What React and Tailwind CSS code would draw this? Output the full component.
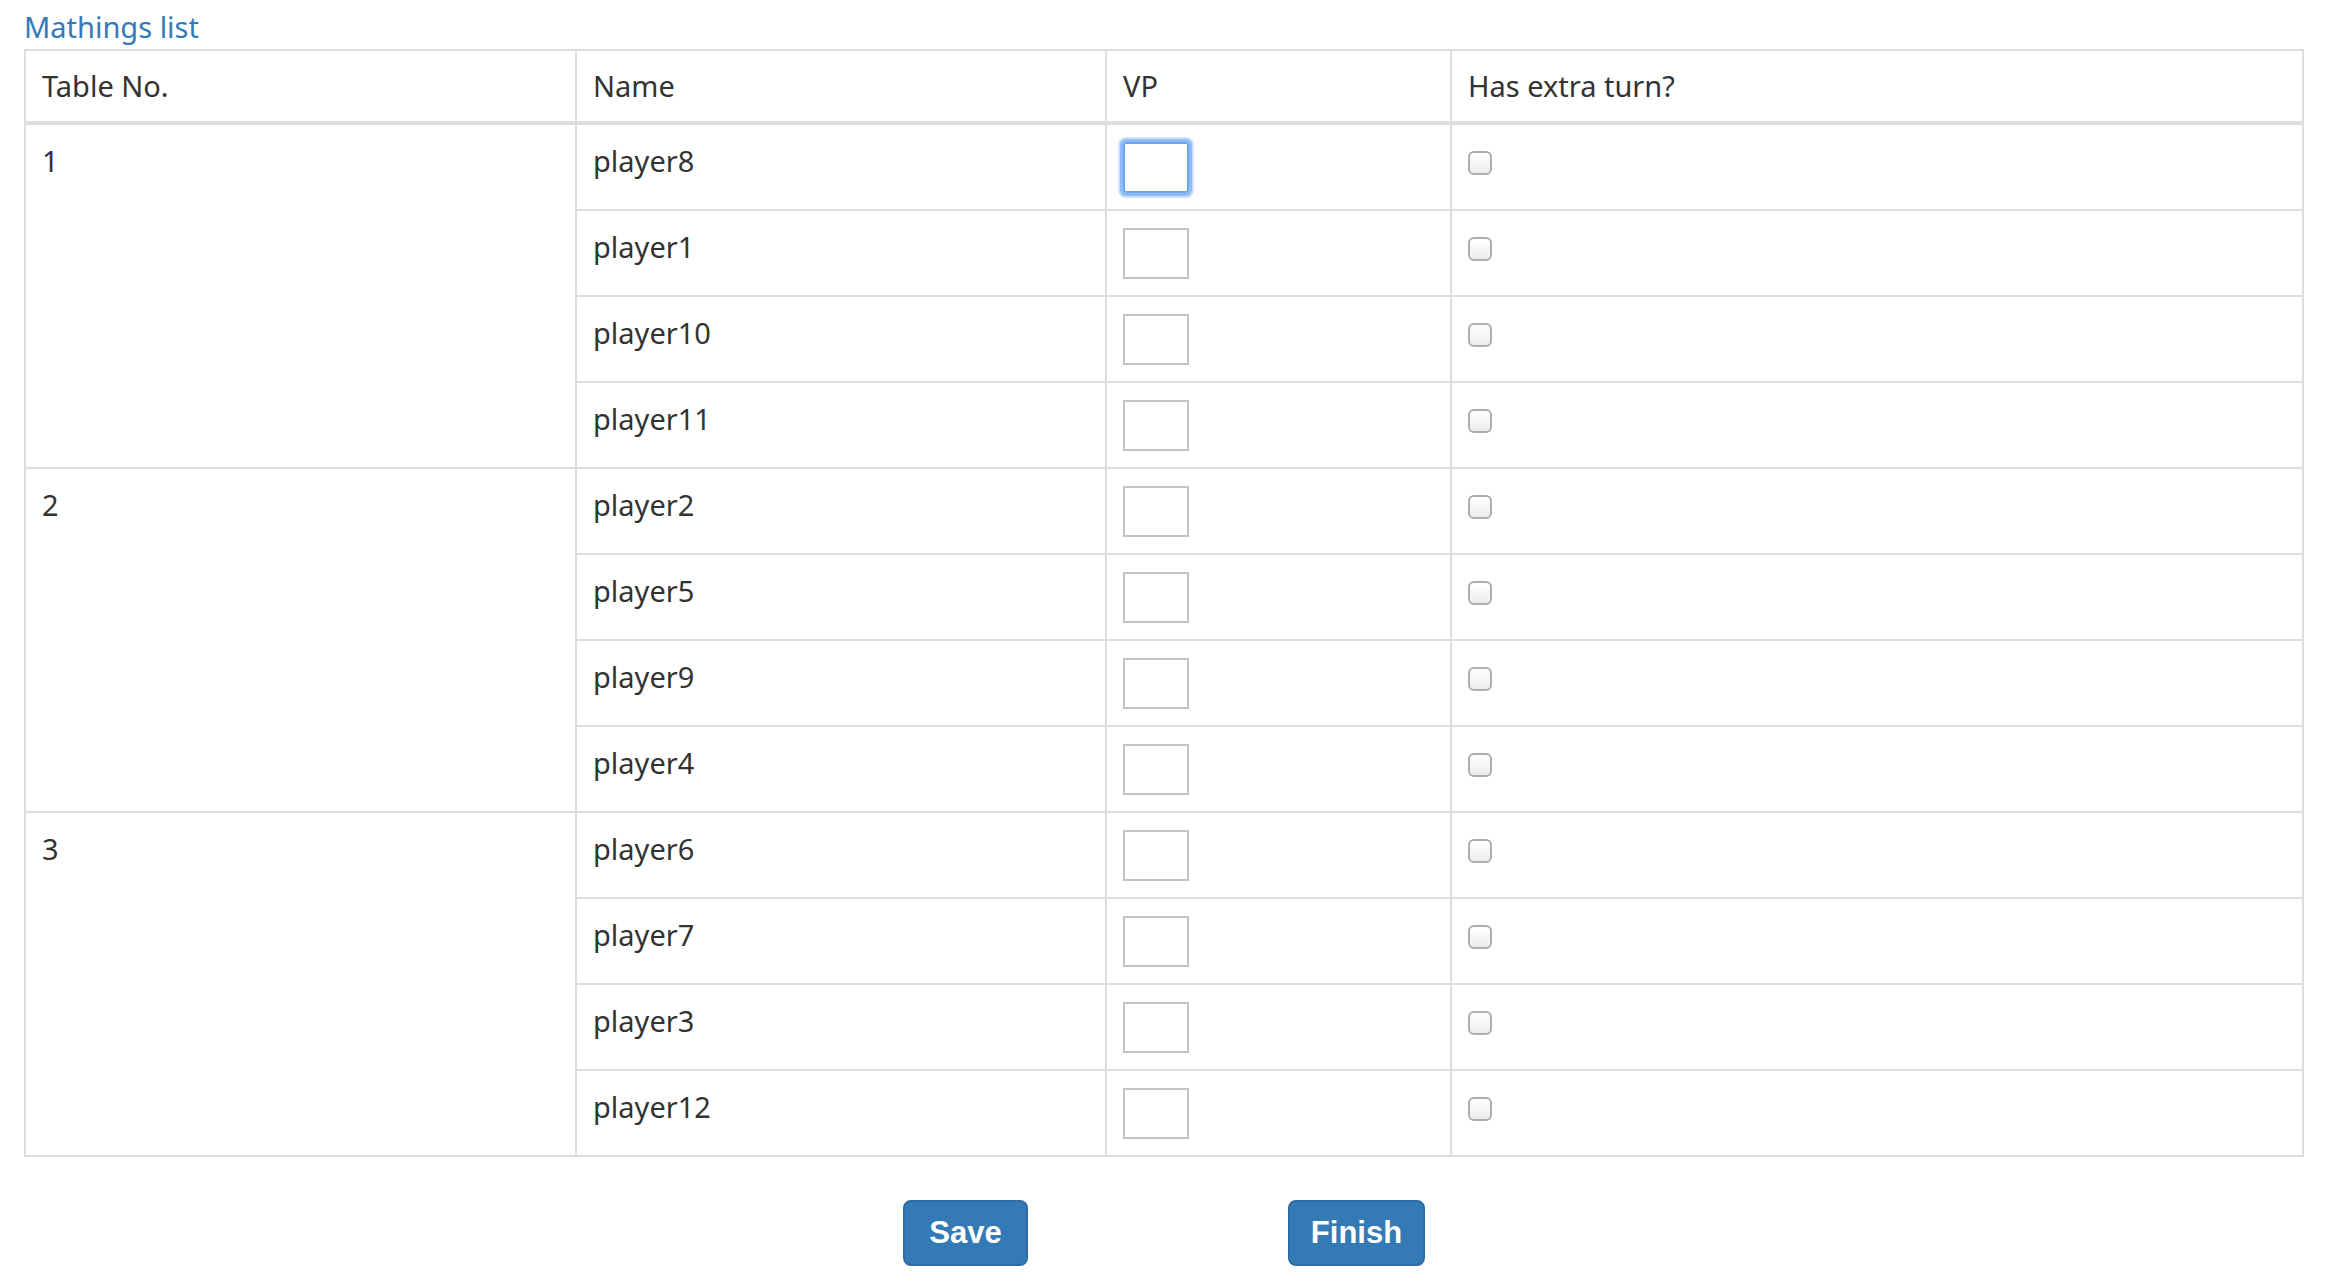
import React from "react";

const tables = [
  { no: 1, players: ["player8", "player1", "player10", "player11"] },
  { no: 2, players: ["player2", "player5", "player9", "player4"] },
  { no: 3, players: ["player6", "player7", "player3", "player12"] },
];

const cell = "border-2 border-[#ddd] px-[16px] py-[16px] align-top leading-[40px]";

export default function App() {
  return (
    <div className="min-h-screen bg-white pl-[24px] pr-[28px] text-[#333] text-[29px] font-['Noto_Sans',sans-serif]">
      <div className="pt-[7px] h-[47px] leading-[40px] text-[#337ab7]">Mathings list</div>
      <table className="mt-[2px] w-full table-fixed border-collapse border-2 border-[#ddd]">
        <colgroup>
          <col className="w-[551px]" />
          <col className="w-[530px]" />
          <col className="w-[345px]" />
          <col />
        </colgroup>
        <thead>
          <tr>
            <th className="border-2 border-b-4 border-[#ddd] px-[16px] py-[15px] text-left font-normal leading-[40px]">Table No.</th>
            <th className="border-2 border-b-4 border-[#ddd] px-[16px] py-[15px] text-left font-normal leading-[40px]">Name</th>
            <th className="border-2 border-b-4 border-[#ddd] px-[16px] py-[15px] text-left font-normal leading-[40px]">VP</th>
            <th className="border-2 border-b-4 border-[#ddd] px-[16px] py-[15px] text-left font-normal leading-[40px]">Has extra turn?</th>
          </tr>
        </thead>
        <tbody>
          {tables.map(t =>
            t.players.map((p, i) => (
              <tr key={p}>
                {i === 0 && <td rowSpan={t.players.length} className={cell}>{t.no}</td>}
                <td className={cell}>{p}</td>
                <td className="border-2 border-[#ddd] px-[16px] py-[16px] align-top">
                  {t.no === 1 && i === 0 ? (
                    <input type="text" className="block mt-[1px] w-[66px] h-[51px] rounded-[3px] border-2 border-[#6aa5ee] shadow-[0_0_0_3px_#8dbcf6,0_0_0_5px_#cfe2fb] outline-none" />
                  ) : (
                    <input type="text" className="block mt-[1px] w-[66px] h-[51px] border-2 border-[#c4c4c4] outline-none" />
                  )}
                </td>
                <td className="border-2 border-[#ddd] px-[16px] py-[16px] align-top">
                  <input type="checkbox" className="block mt-[10px] w-[24px] h-[24px] appearance-none rounded-[6px] border-2 border-[#adadad] bg-linear-to-b from-white to-[#ececec]" />
                </td>
              </tr>
            ))
          )}
        </tbody>
      </table>
      <div className="mt-[43px] flex justify-center gap-[260px] font-['Liberation_Sans',Arial,sans-serif]">
        <button className="w-[125px] h-[66px] rounded-[8px] border-2 border-[#2e6da4] bg-[#337ab7] text-white text-[31px] font-bold">Save</button>
        <button className="w-[137px] h-[66px] rounded-[8px] border-2 border-[#2e6da4] bg-[#337ab7] text-white text-[31px] font-bold">Finish</button>
      </div>
    </div>
  );
}
